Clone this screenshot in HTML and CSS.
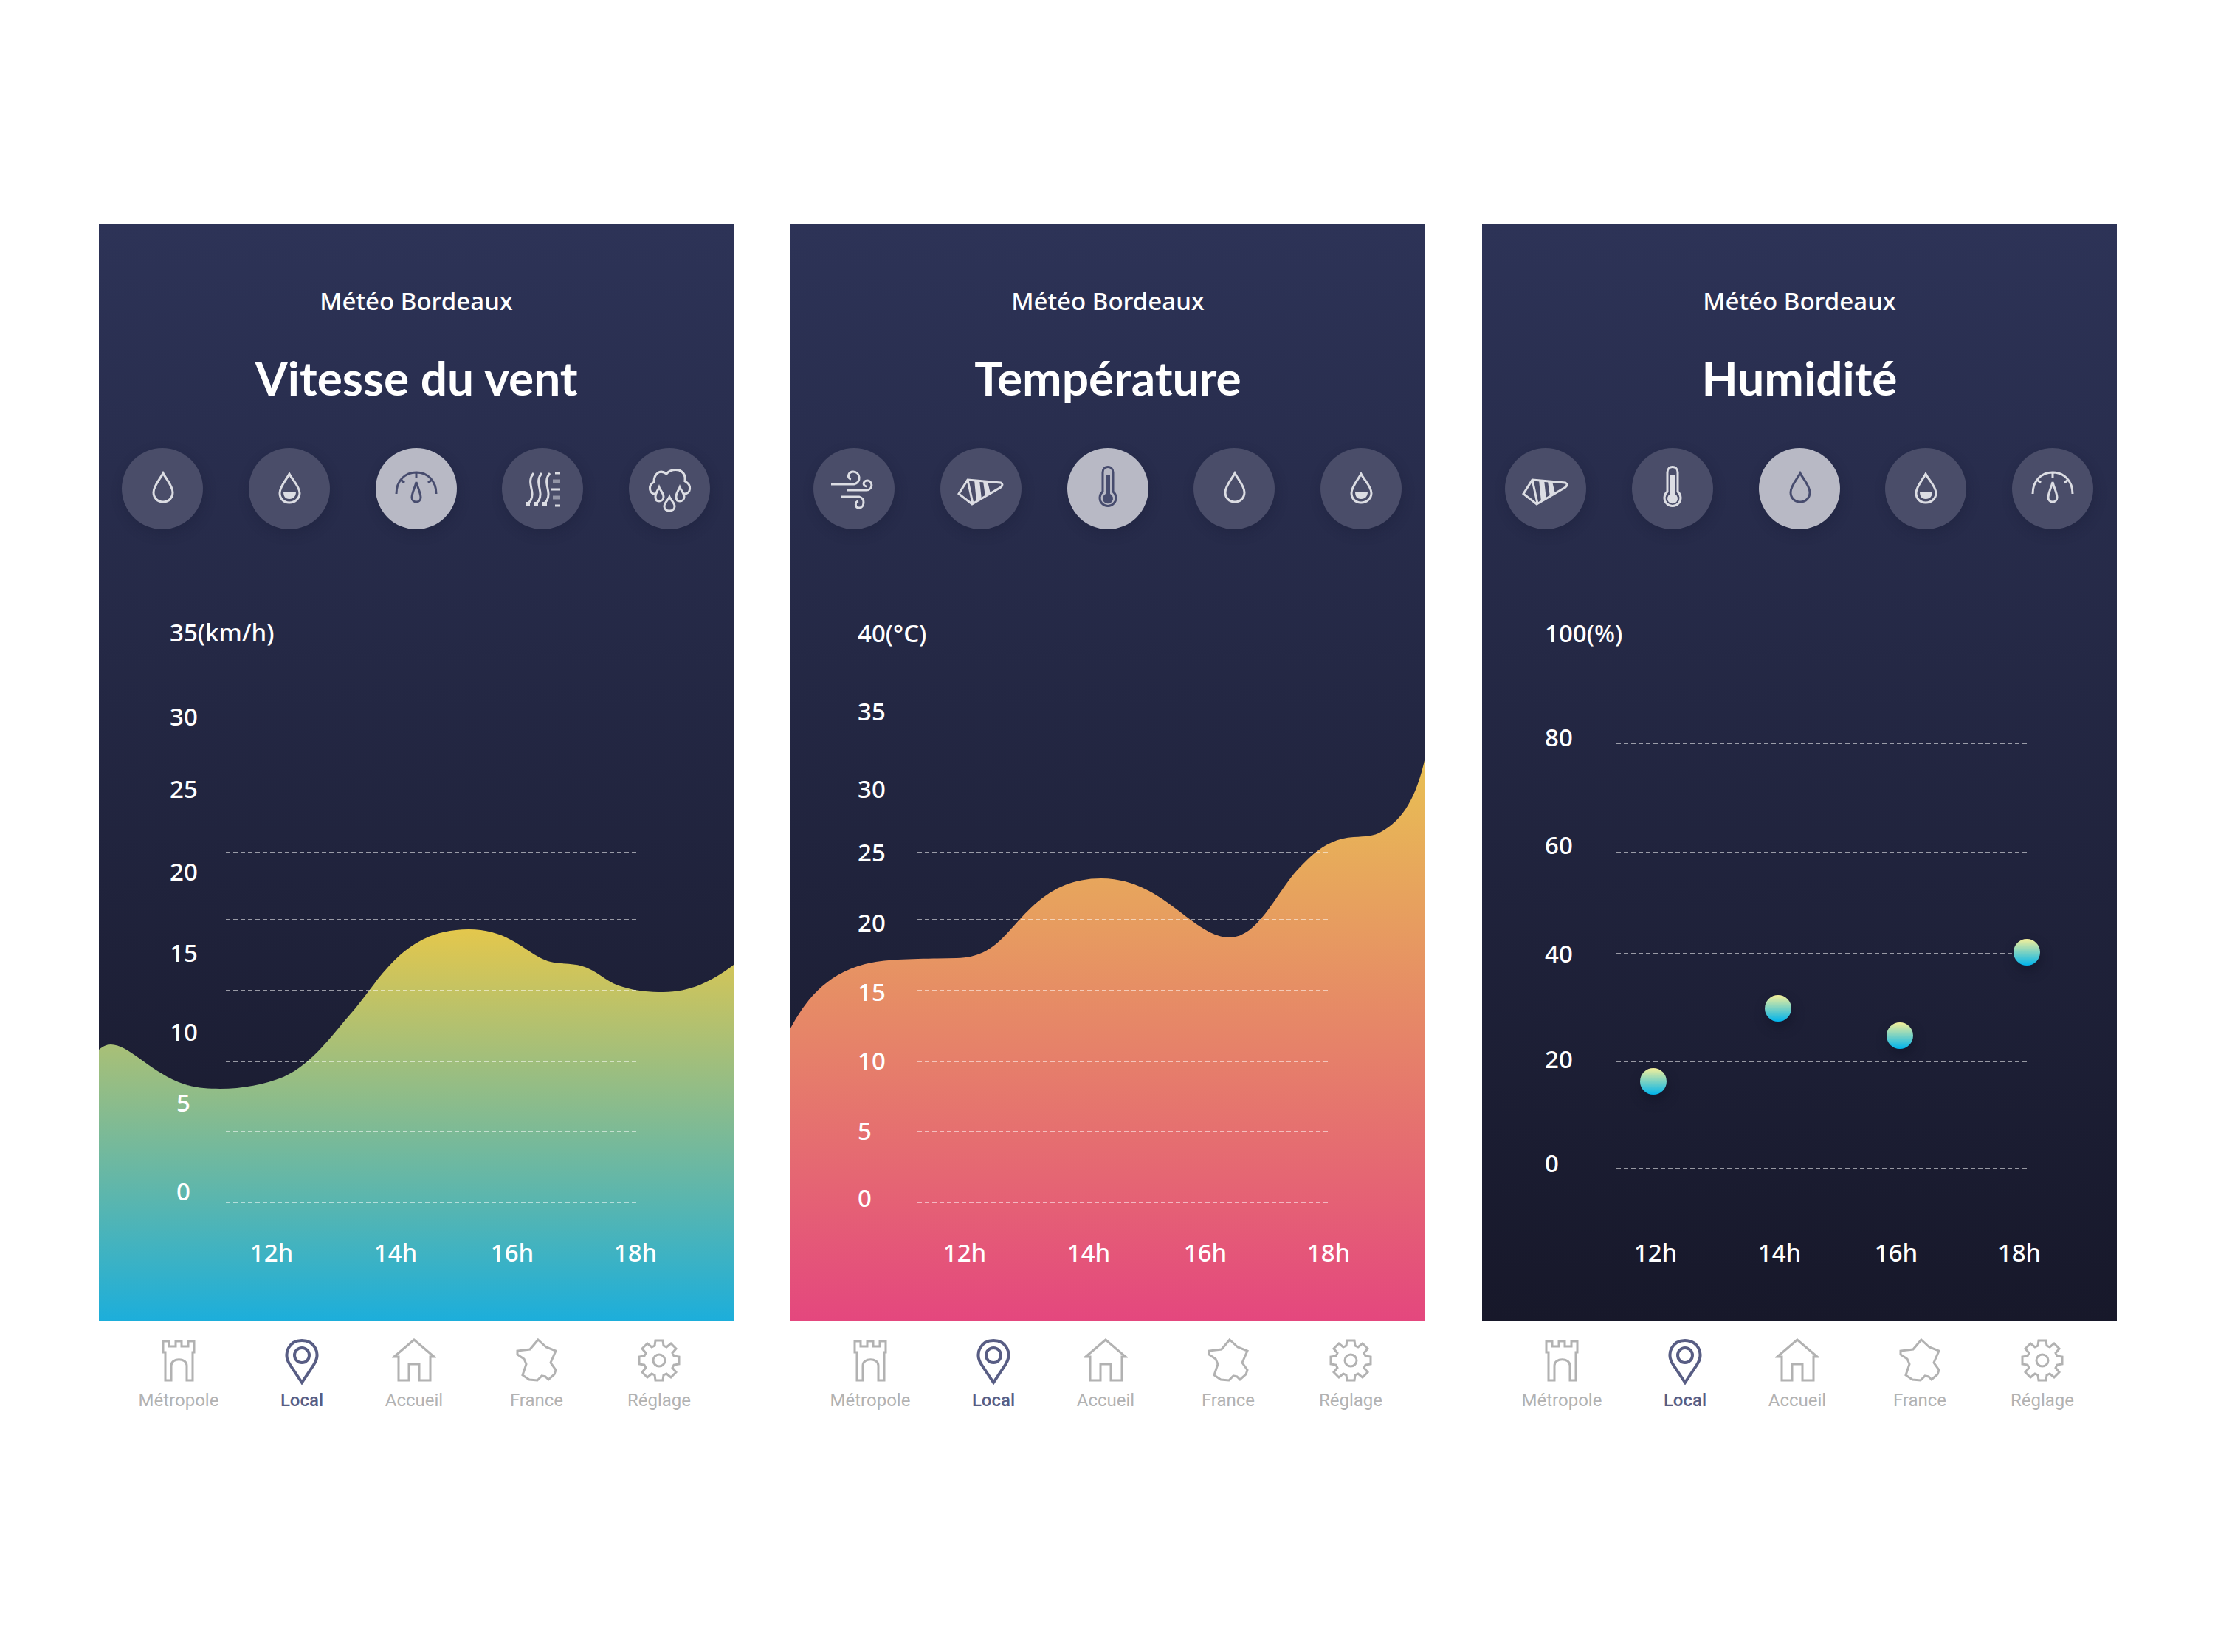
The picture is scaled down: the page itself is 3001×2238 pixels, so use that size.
FILE: index.html
```html
<!DOCTYPE html>
<html lang="fr">
<head>
<meta charset="utf-8">
<meta name="viewport" content="width=device-width, initial-scale=1">
<title>Météo Bordeaux</title>
<link rel="stylesheet" href="styles.css">
</head>
<body>
<svg class="sprite" aria-hidden="true">
  <defs>
    <linearGradient id="wind-fill" gradientUnits="userSpaceOnUse" x1="0" y1="458" x2="0" y2="990">
      <stop offset="0" stop-color="#e4c74c"/><stop offset="1" stop-color="#1caedb"/>
    </linearGradient>
    <linearGradient id="temp-fill" gradientUnits="userSpaceOnUse" x1="0" y1="226" x2="0" y2="990">
      <stop offset="0" stop-color="#e8c053"/><stop offset="1" stop-color="#e4477e"/>
    </linearGradient>
    <linearGradient id="dot-fill" x1="0" y1="0" x2="0" y2="1">
      <stop offset="0" stop-color="#f5f09a"/><stop offset="1" stop-color="#00b4ec"/>
    </linearGradient>
  </defs>
  <symbol id="drop" viewBox="0 0 110 110">
    <path d="M56 34C52 42 43 51 43 60C43 67 48 73 56 73S69 67 69 60C69 51 60 42 56 34Z"/>
  </symbol>
  <symbol id="drop-half" viewBox="0 0 110 110">
    <path d="M55 35C51 43 42 52 42 61C42 68 47 74 55 74S69 68 69 61C69 52 59 43 55 35Z"/>
    <path class="solid" d="M47 59H64C64 65 61 69 55 69S47 65 47 59Z"/>
  </symbol>
  <symbol id="gauge" viewBox="0 0 110 110">
    <path d="M28 62C28 44 40 33 55 33S82 44 82 62M55 33V40M34 43L39 47M76 43L71 47"/>
    <path d="M55 46C53 54 49 61 49 67C49 71 52 73 55 73S61 71 61 67C61 61 57 54 55 46Z"/>
  </symbol>
  <symbol id="dew" viewBox="0 0 110 110">
    <path d="M43 34C32 47 46 58 39 71L34 77M54 34C43 47 57 58 50 71L45 77M65 34C54 47 68 58 61 71L56 77"/>
    <path d="M67 56H79M72 34H79M72 78H79"/>
    <path class="faint" d="M69 45H79M69 67H79"/>
    <path class="solid" d="M32 73H38V79H32ZM43 73H49V79H43ZM55 73H61V79H55Z"/>
  </symbol>
  <symbol id="rain" viewBox="0 0 110 110">
    <path d="M36 62C28 63 25 51 34 46C34 35 42 28 51 35C56 29 62 29 68 30C75 33 77 39 76 45C86 50 84 62 75 62"/>
    <path d="M41 53C39 58 36 61 36 66C36 70 38 72 41 72S47 70 47 66C47 61 43 58 41 53ZM69 53C67 58 64 61 64 66C64 70 66 72 69 72S75 70 75 66C75 61 71 58 69 53ZM55 66C53 71 48 74 48 79C48 83 51 85 55 85S62 83 62 79C62 74 57 71 55 66Z"/>
  </symbol>
  <symbol id="wind" viewBox="0 0 110 110">
    <path d="M24 49H55C66 46 63 32 54 32C47 32 45 41 51 42M45 57H72C82 56 80 44 73 44C67 44 66 52 73 52M38 66H62C71 68 69 81 62 81C56 81 56 73 61 72"/>
  </symbol>
  <symbol id="sock" viewBox="0 0 110 110">
    <path d="M37 43L82 47Q86 49 82 53L43 76L25 62ZM37 43L44 75"/>
    <path class="solid" d="M46 43H53L56 70L49 73ZM58 45H64L68 62L61 66Z"/>
  </symbol>
  <symbol id="thermo" viewBox="0 0 110 110">
    <path d="M48 59V33C48 23 62 23 62 33V59A11 11 0 1 1 48 59Z"/>
    <path class="solid" d="M52 36H58V62A7 7 0 1 1 52 62Z"/>
  </symbol>
  <symbol id="castle" viewBox="0 0 60 64">
    <path d="M9 5H17V12H26V5H34V12H43V5H51V20H49V58H41V38C41 27 20 27 20 38V58H12V20H9Z"/>
  </symbol>
  <symbol id="pin" viewBox="0 0 60 64">
    <path d="M30 61L14 37C3 20 14 4 30 4S57 20 46 37Z"/><circle cx="30" cy="24" r="10"/>
  </symbol>
  <symbol id="house" viewBox="0 0 60 64">
    <path d="M30 3L3 26H9V58H23V36H37V58H52V26H57Z"/>
  </symbol>
  <symbol id="france" viewBox="0 0 60 64">
    <path d="M32 3L43 13L56 18L49 34L56 44L54 50L46 57L42 53L37 52L31 58L20 57L11 51L16 36L13 29L4 23L4 18L21 16Z"/>
  </symbol>
  <symbol id="gear" viewBox="0 0 60 64">
    <path transform="translate(30 31)" d="M-6-20L-5-27H5L6-20L10-18L16-23L23-16L18-10L20-6L27-5V5L20 6L18 10L23 16L16 23L10 18L6 20L5 27H-5L-6 20L-10 18L-16 23L-23 16L-18 10L-20 6L-27 5V-5L-20-6L-18-10L-23-16L-16-23L-10-18Z"/>
    <circle cx="30" cy="31" r="8"/>
  </symbol>
</svg>

<main class="screens">
  <article class="screen">
    <section class="panel">
      <p class="place">Météo Bordeaux</p>
      <h1 class="title">Vitesse du vent</h1>
      <div class="metrics">
        <button class="metric" aria-label="Humidité"><svg><use href="#drop"/></svg></button>
        <button class="metric" aria-label="Précipitations"><svg><use href="#drop-half"/></svg></button>
        <button class="metric active" aria-label="Vitesse du vent"><svg><use href="#gauge"/></svg></button>
        <button class="metric" aria-label="Point de rosée"><svg><use href="#dew"/></svg></button>
        <button class="metric" aria-label="Pluie"><svg><use href="#rain"/></svg></button>
      </div>
      <svg class="chart" viewBox="0 0 860 990" role="img" aria-label="Vitesse du vent">
        <path fill="url(#wind-fill)" d="M-4 626L0 622C5 618 10 615 16 615C40 615 65 648 108 666C128 674 145 675 164 675C195 675 225 669 250 659C290 641 320 597 338 577C380 530 410 459 501 459C560 459 580 495 612 503C630 507 645 504 661 511C680 519 690 532 710 537C730 543 745 544 765 544C800 544 830 530 860 507L864 504V994H-4Z"/>
        <path class="lines" d="M172 355H731M172 446H731M172 542H731M172 638H731M172 733H731M172 829H731"/>
        <g class="labels">
          <text x="96" y="69">35(km/h)</text><text x="96" y="183">30</text><text x="96" y="281">25</text><text x="96" y="393">20</text><text x="96" y="503">15</text><text x="96" y="610">10</text><text x="105" y="706">5</text><text x="105" y="826">0</text>
        </g>
        <g class="labels hours">
          <text x="234" y="909">12h</text><text x="402" y="909">14h</text><text x="560" y="909">16h</text><text x="727" y="909">18h</text>
        </g>
      </svg>
    </section>
    <nav class="tabs">
      <a href="#metropole" class="tab"><svg><use href="#castle"/></svg>Métropole</a>
      <a href="#local" class="tab current"><svg><use href="#pin"/></svg>Local</a>
      <a href="#accueil" class="tab"><svg><use href="#house"/></svg>Accueil</a>
      <a href="#carte" class="tab"><svg><use href="#france"/></svg>France</a>
      <a href="#reglage" class="tab"><svg><use href="#gear"/></svg>Réglage</a>
    </nav>
  </article>

  <article class="screen">
    <section class="panel">
      <p class="place">Météo Bordeaux</p>
      <h1 class="title">Température</h1>
      <div class="metrics">
        <button class="metric" aria-label="Vent"><svg><use href="#wind"/></svg></button>
        <button class="metric" aria-label="Rafales"><svg><use href="#sock"/></svg></button>
        <button class="metric active" aria-label="Température"><svg><use href="#thermo"/></svg></button>
        <button class="metric" aria-label="Humidité"><svg><use href="#drop"/></svg></button>
        <button class="metric" aria-label="Précipitations"><svg><use href="#drop-half"/></svg></button>
      </div>
      <svg class="chart" viewBox="0 0 860 990" role="img" aria-label="Température">
        <path fill="url(#temp-fill)" d="M-4 600L0 593C20 557 45 521 101 506C130 498 180 499 225 498C255 497 270 487 286 472C315 445 345 390 421 390C505 390 545 470 595 470C635 470 660 405 690 375C715 348 735 336 763 334C780 333 790 333 800 327C830 311 848 280 860 226L864 210V994H-4Z"/>
        <path class="lines" d="M172 355H731M172 446H731M172 542H731M172 638H731M172 733H731M172 829H731"/>
        <g class="labels">
          <text x="91" y="70">40(°C)</text><text x="91" y="176">35</text><text x="91" y="281">30</text><text x="91" y="367">25</text><text x="91" y="462">20</text><text x="91" y="556">15</text><text x="91" y="649">10</text><text x="91" y="744">5</text><text x="91" y="835">0</text>
        </g>
        <g class="labels hours">
          <text x="236" y="909">12h</text><text x="404" y="909">14h</text><text x="562" y="909">16h</text><text x="729" y="909">18h</text>
        </g>
      </svg>
    </section>
    <nav class="tabs">
      <a href="#metropole" class="tab"><svg><use href="#castle"/></svg>Métropole</a>
      <a href="#local" class="tab current"><svg><use href="#pin"/></svg>Local</a>
      <a href="#accueil" class="tab"><svg><use href="#house"/></svg>Accueil</a>
      <a href="#carte" class="tab"><svg><use href="#france"/></svg>France</a>
      <a href="#reglage" class="tab"><svg><use href="#gear"/></svg>Réglage</a>
    </nav>
  </article>

  <article class="screen">
    <section class="panel">
      <p class="place">Météo Bordeaux</p>
      <h1 class="title">Humidité</h1>
      <div class="metrics">
        <button class="metric" aria-label="Rafales"><svg><use href="#sock"/></svg></button>
        <button class="metric" aria-label="Température"><svg><use href="#thermo"/></svg></button>
        <button class="metric active" aria-label="Humidité"><svg><use href="#drop"/></svg></button>
        <button class="metric" aria-label="Précipitations"><svg><use href="#drop-half"/></svg></button>
        <button class="metric" aria-label="Vitesse du vent"><svg><use href="#gauge"/></svg></button>
      </div>
      <svg class="chart" viewBox="0 0 860 990" role="img" aria-label="Humidité">
        <path class="lines" d="M182 207H740M182 355H740M182 492H740M182 638H740M182 783H740"/>
        <g class="dots">
          <circle cx="232" cy="665" r="18"/><circle cx="401" cy="566" r="18"/><circle cx="566" cy="603" r="18"/><circle cx="738" cy="490" r="18"/>
        </g>
        <g class="labels">
          <text x="85" y="70">100(%)</text><text x="85" y="211">80</text><text x="85" y="357">60</text><text x="85" y="504">40</text><text x="85" y="647">20</text><text x="85" y="788">0</text>
        </g>
        <g class="labels hours">
          <text x="235" y="909">12h</text><text x="403" y="909">14h</text><text x="561" y="909">16h</text><text x="728" y="909">18h</text>
        </g>
      </svg>
    </section>
    <nav class="tabs">
      <a href="#metropole" class="tab"><svg><use href="#castle"/></svg>Métropole</a>
      <a href="#local" class="tab current"><svg><use href="#pin"/></svg>Local</a>
      <a href="#accueil" class="tab"><svg><use href="#house"/></svg>Accueil</a>
      <a href="#carte" class="tab"><svg><use href="#france"/></svg>France</a>
      <a href="#reglage" class="tab"><svg><use href="#gear"/></svg>Réglage</a>
    </nav>
  </article>
</main>
</body>
</html>
```
FILE: styles.css
```css
* { box-sizing: border-box; }

body {
  margin: 0;
  background: #fff;
  font-family: "Noto Sans", "Open Sans", sans-serif;
}

.sprite { position: absolute; width: 0; height: 0; }

.screens {
  display: grid;
  grid-template-columns: repeat(3, 1fr);
  gap: 77px;
  padding: 304px 133px 304px 134px;
}

.panel {
  padding-top: 80px;
  overflow: hidden;
  background: linear-gradient(#2d3357, #17182a);
  color: #fff;
  text-align: center;
}

.place {
  margin: 0;
  font-size: 33px;
  line-height: 48px;
  font-weight: 500;
}

.title {
  margin: 40px 0 55px;
  font-family: Lato, "Noto Sans", sans-serif;
  font-size: 64px;
  line-height: 80px;
  font-weight: 700;
}

.metrics {
  display: flex;
  justify-content: space-between;
  padding: 0 32px 0 31px;
  margin-bottom: 83px;
}

.metric {
  width: 110px;
  height: 110px;
  padding: 0;
  border: 0;
  border-radius: 50%;
  background: #4a4d69;
  color: #dcdde3;
  box-shadow: 2px 6px 16px rgba(20, 22, 48, 0.25);
}

.metric.active {
  background: #b8b9c5;
  color: #474c6e;
}

.metric svg {
  display: block;
  width: 110px;
  height: 110px;
  fill: none;
  stroke: currentColor;
  stroke-width: 3px;
}

.solid { fill: currentColor; stroke: none; }
.faint { stroke-width: 5px; opacity: 0.5; }

.chart {
  display: block;
  width: 100%;
  height: auto;
  overflow: visible;
}

.lines {
  fill: none;
  stroke: rgba(255, 255, 255, 0.55);
  stroke-width: 2px;
  stroke-dasharray: 6 4;
}

.labels {
  fill: #fff;
  font-size: 33px;
  font-weight: 500;
}

.hours { text-anchor: middle; }

.dots {
  fill: url(#dot-fill);
  filter: drop-shadow(2px 8px 8px rgba(10, 12, 30, 0.4));
}

.tabs {
  display: grid;
  grid-template-columns: 166fr 168fr 136fr 196fr 136fr;
  padding: 22px 33px 0 25px;
}

.tab {
  display: flex;
  flex-direction: column;
  align-items: center;
  gap: 7px;
  color: #b2b2b2;
  font-family: Roboto, sans-serif;
  font-size: 24px;
  line-height: 28px;
  text-decoration: none;
}

.tab svg {
  width: 60px;
  height: 64px;
  fill: none;
  stroke: currentColor;
  stroke-width: 3px;
}

.current {
  color: #585d84;
  font-weight: 500;
}

.current svg { stroke-width: 4px; }
```
